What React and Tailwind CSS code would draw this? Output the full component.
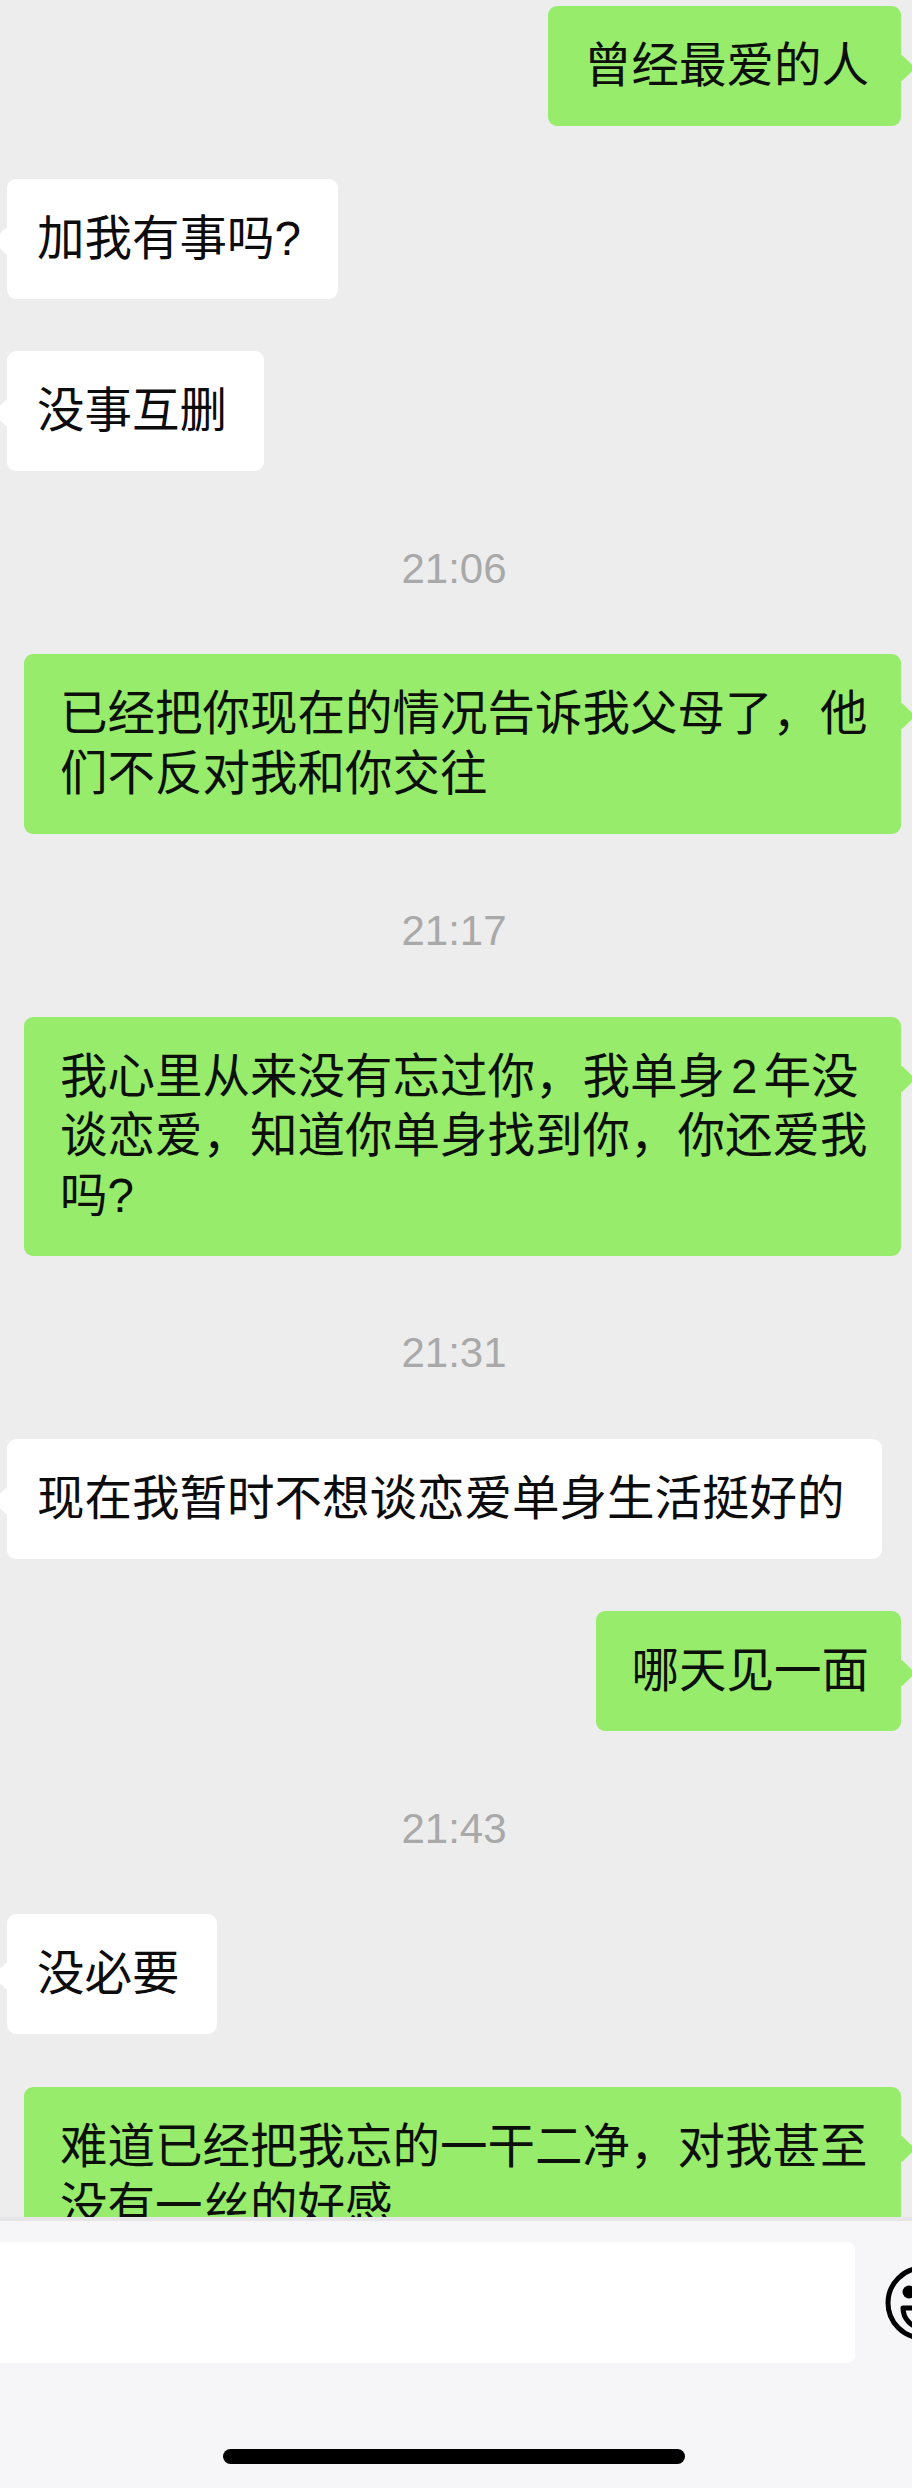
const FONT = 'font-["Liberation_Sans","Noto_Sans_CJK_SC",sans-serif]';

function Mine({ children, width }) {
  return (
    <div className="relative shrink-0 self-end">
      <div className={`${width} rounded-[9px] bg-[#97ed6b] pl-[36px] pr-[32px] pt-[30px] pb-[30.5px] text-[47.5px] leading-[59.5px] text-[#0c0f0a]`}>
        {children}
      </div>
      <span className="absolute right-[-10px] top-[52px] h-[20px] w-[20px] rotate-45 rounded-[3px] bg-[#97ed6b]" />
    </div>
  );
}

function Theirs({ children }) {
  return (
    <div className="relative shrink-0 self-start">
      <div className="rounded-[9px] bg-white pl-[30px] pr-[37px] pt-[30px] pb-[30.5px] text-[47.5px] leading-[59.5px] text-[#0c0c0c]">
        {children}
      </div>
      <span className="absolute left-[-10px] top-[52px] h-[20px] w-[20px] rotate-45 rounded-[3px] bg-white" />
    </div>
  );
}

function Time({ children }) {
  return (
    <div className="shrink-0 pt-[12px] text-center text-[42px] leading-[66px] text-[#a9a9a9]">{children}</div>
  );
}

export default function App() {
  return (
    <div className={`${FONT} flex h-[2488px] w-[912px] flex-col overflow-hidden bg-[#ededed]`}>
      <main className="flex h-[2217px] shrink-0 flex-col gap-[52.5px] overflow-hidden pl-[7px] pr-[11px] pt-[6px]">
        <Mine>曾经最爱的人</Mine>
        <Theirs>加我有事吗?</Theirs>
        <Theirs>没事互删</Theirs>
        <Time>21:06</Time>
        <Mine width="w-[877px]">已经把你现在的情况告诉我父母了，他们不反对我和你交往</Mine>
        <Time>21:17</Time>
        <Mine width="w-[877px]">
          我心里从来没有忘过你，我单身<span className="mx-[6px]">2</span>年没谈恋爱，知道你单身找到你，你还爱我吗?
        </Mine>
        <Time>21:31</Time>
        <Theirs>现在我暂时不想谈恋爱单身生活挺好的</Theirs>
        <Mine>哪天见一面</Mine>
        <Time>21:43</Time>
        <Theirs>没必要</Theirs>
        <Mine width="w-[877px]">难道已经把我忘的一干二净，对我甚至没有一丝的好感</Mine>
      </main>
      <footer className="flex flex-1 flex-col overflow-hidden border-t-[4px] border-[#e6e6e8] bg-[#f6f6f8] pt-[21px]">
        <div className="flex items-center">
          <div className="h-[121px] w-[855px] shrink-0 rounded-r-[8px] bg-white" />
          <svg className="ml-[30px] h-[76px] w-[76px] shrink-0" viewBox="0 0 76 76" fill="none" aria-hidden="true">
            <circle cx="38" cy="38" r="35" stroke="#000" strokeWidth="5" />
            <circle cx="24" cy="27" r="6.5" fill="#000" />
            <circle cx="52" cy="27" r="6.5" fill="#000" />
            <path d="M18 43H58A20 20 0 0 1 18 43Z" stroke="#000" strokeWidth="5" strokeLinejoin="round" />
          </svg>
        </div>
        <div className="ml-[223px] mt-[86px] h-[15px] w-[462px] rounded-full bg-black" />
      </footer>
    </div>
  );
}
